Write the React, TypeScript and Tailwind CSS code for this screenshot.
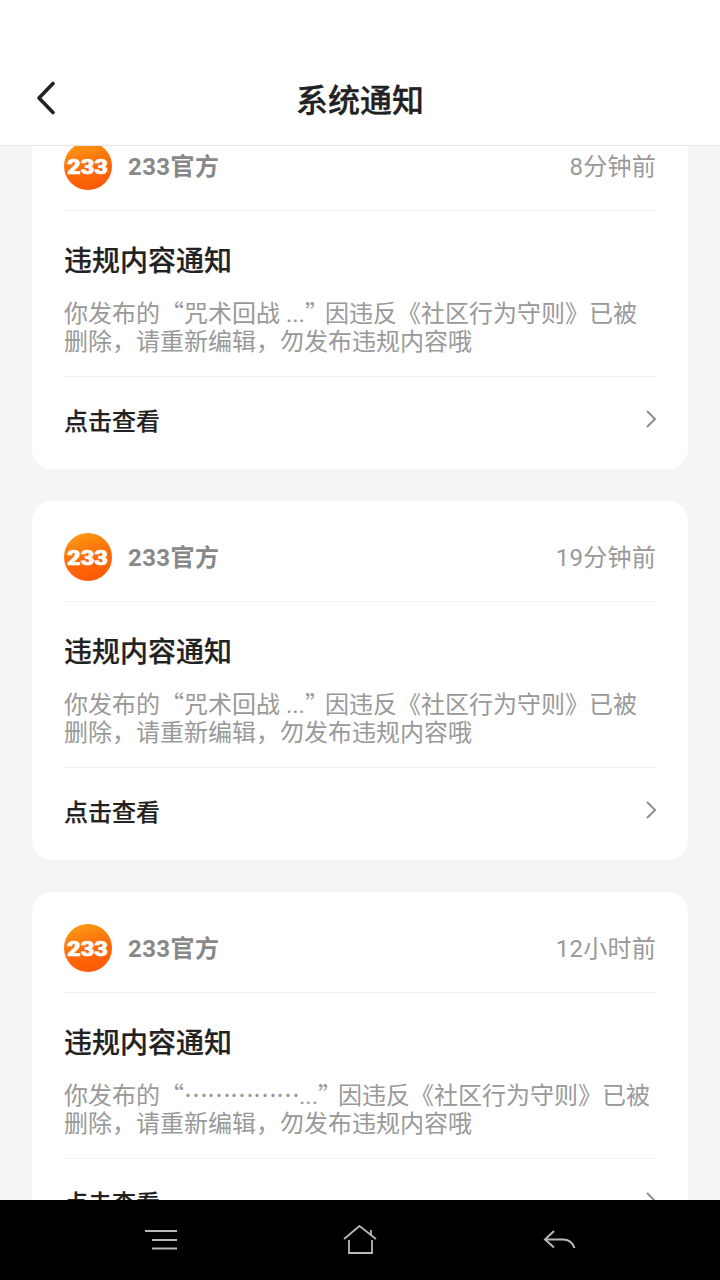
import React from 'react';

interface Notice {
  time: string;
  quote: React.ReactNode;
}

const cjk = { fontFamily: '"Noto Sans CJK SC", sans-serif' };

const notices: Notice[] = [
  { time: '8分钟前', quote: '咒术回战 ...' },
  { time: '19分钟前', quote: '咒术回战 ...' },
  {
    time: '12小时前',
    quote: (
      <>
        <span className="tracking-[-1px]" style={cjk}>……………</span>...
      </>
    ),
  },
];

const Logo: React.FC = () => (
  <svg width="48" height="48" viewBox="0 0 48 48" className="shrink-0">
    <defs>
      <linearGradient id="logoFill" x1="0.3" y1="0" x2="0.6" y2="1">
        <stop offset="0" stopColor="#fb9a12" />
        <stop offset="0.55" stopColor="#fd6a0a" />
        <stop offset="1" stopColor="#fb5a06" />
      </linearGradient>
    </defs>
    <circle cx="24" cy="24" r="24" fill="url(#logoFill)" />
    <text
      x="3"
      y="31.5"
      textLength="41"
      lengthAdjust="spacingAndGlyphs"
      fontFamily="Roboto, sans-serif"
      fontWeight="900"
      fontSize="20"
      fill="#ffffff"
      stroke="#ffffff"
      strokeWidth="0.6"
    >
      233
    </text>
  </svg>
);

const NoticeCard: React.FC<{ notice: Notice }> = ({ notice }) => (
  <div className="bg-white rounded-[20px] px-8 h-[359px] shrink-0">
    <div className="flex items-center h-[101px] pt-[12px] border-b border-[#eeeeee]">
      <Logo />
      <span className="ml-4 mt-[2px] text-[24px] font-bold tracking-[0.4px] text-[#888888]">233官方</span>
      <span className="ml-auto mt-[2px] text-[24px] tracking-[0.25px] text-[#999999]">{notice.time}</span>
    </div>
    <div className="h-[166px] border-b border-[#eeeeee] pt-[33px]">
      <div className="text-[28px] leading-[36px] font-medium [-webkit-text-stroke:0.2px] text-[#222222]">违规内容通知</div>
      <p className="mt-[18px] text-[24px] leading-[28px] whitespace-nowrap text-[#999999]">
        你发布的<span style={cjk}>“</span>
        {notice.quote}
        <span className="tracking-[-4px]" style={cjk}>”</span>因违反<span style={cjk}>《</span>社区行为守则<span style={cjk}>》</span>已被
        <br />
        删除，请重新编辑，勿发布违规内容哦
      </p>
    </div>
    <div className="flex items-center justify-between h-[92px]">
      <span className="-mt-[2px] text-[24px] font-medium [-webkit-text-stroke:0.2px] text-[#222222]">点击查看</span>
      <svg width="10" height="18" viewBox="0 0 10 18" fill="none" stroke="#909090" strokeWidth="2" className="-mt-[8px]">
        <path d="M1 1l8 8-8 8" />
      </svg>
    </div>
  </div>
);

const App: React.FC = () => {
  return (
    <div
      className="w-[720px] h-[1280px] flex flex-col overflow-hidden bg-[#f5f5f5]"
      style={{ fontFamily: 'Roboto, "Noto Sans CJK SC", sans-serif' }}
    >
      <header className="relative h-[146px] shrink-0 bg-white border-b border-[#e5e5e5] flex items-center justify-center pt-[56px]">
        <svg width="24" height="36" viewBox="0 0 24 36" fill="none" stroke="#222222" strokeWidth="3.6" strokeLinecap="round" strokeLinejoin="round" className="absolute left-[34px] top-[80px]">
          <path d="M19 3.5L5 18l14 14.5" />
        </svg>
        <h1 className="text-[32px] font-medium [-webkit-text-stroke:0.3px] text-[#222222]">系统通知</h1>
      </header>
      <main className="flex-1 overflow-hidden px-8">
        <div className="flex flex-col gap-8 -mt-[36px]">
          {notices.map((notice, i) => (
            <NoticeCard key={i} notice={notice} />
          ))}
        </div>
      </main>
      <nav className="h-[80px] shrink-0 bg-black flex items-center justify-center gap-[166px]">
        <svg width="33" height="24" viewBox="0 0 33 24" fill="none" stroke="#b8b8b8" strokeWidth="2">
          <path d="M1 3h32M8 12h25M8 20.5h25" />
        </svg>
        <svg width="34" height="30" viewBox="0 0 34 30" fill="none" stroke="#b8b8b8" strokeWidth="1.8">
          <path d="M1 14L16.5 1 33 14" />
          <path d="M6 15v13h23V15" />
          <path d="M28 5v5" />
        </svg>
        <svg width="33" height="22" viewBox="0 0 33 22" fill="none" stroke="#b8b8b8" strokeWidth="2">
          <path d="M11 2L2 10.5l9 8" />
          <path d="M2 10.5h18c5.5 0 9.5 3 11.5 8.5" />
        </svg>
      </nav>
    </div>
  );
};

export default App;
